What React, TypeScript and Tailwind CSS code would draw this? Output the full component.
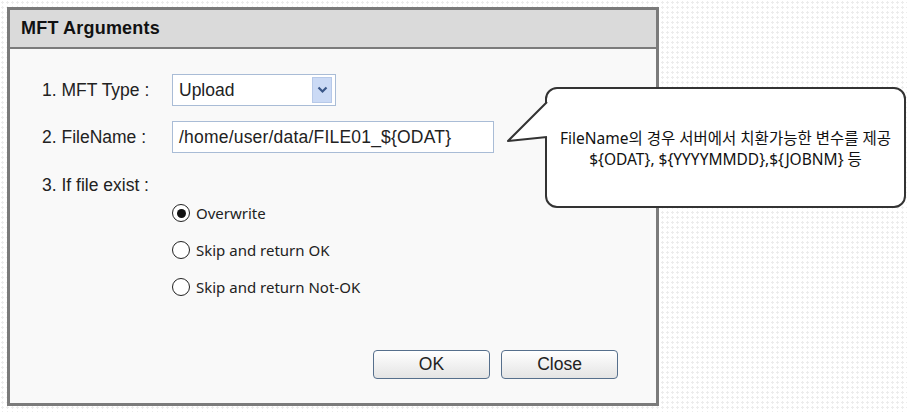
import { useState } from "react";

const options = [
  { id: "overwrite", label: "Overwrite" },
  { id: "skip-ok", label: "Skip and return OK" },
  { id: "skip-nok", label: "Skip and return Not-OK" },
];

function Radio({ checked }: { checked: boolean }) {
  return (
    <span className="w-[18px] h-[18px] rounded-full border-[1.5px] border-[#222] bg-white flex items-center justify-center shrink-0">
      {checked && <span className="w-[9px] h-[9px] rounded-full bg-[#111]" />}
    </span>
  );
}

export default function App() {
  const [choice, setChoice] = useState("overwrite");

  return (
    <div className="relative w-[907px] h-[412px] overflow-hidden bg-white bg-[radial-gradient(circle,#ececec_1px,transparent_1.2px)] bg-size-[5px_5px] font-['Liberation_Sans',Arial,sans-serif] text-[#222]">
      {/* dialog */}
      <div className="ml-[7px] mt-[7px] w-[652px] h-[399px] border-[3px] border-[#7b7b7b] bg-[#f9f9f9] flex flex-col">
        <div className="h-[39px] bg-[#dadada] border-b-2 border-[#7b7b7b] flex items-center pl-[11px] shrink-0">
          <span className="text-[18px] font-bold text-[#111] tracking-[0.2px]">MFT Arguments</span>
        </div>

        <div className="flex-1 flex flex-col pl-[32px] pr-[38px] pt-[25px] pb-[24px] text-[17.5px]">
          <div className="flex items-center h-[32px]">
            <span className="w-[130px]">1. MFT Type :</span>
            <div className="w-[164px] h-[32px] border border-[#a9bcd6] bg-white flex items-center pl-[6px] pr-[3px]">
              <span className="flex-1">Upload</span>
              <span className="w-[20px] h-[26px] bg-[#cbdaf5] border border-[#b7c9e8] flex items-center justify-center">
                <svg width="11" height="8" viewBox="0 0 11 8">
                  <path d="M1.5 1.5 L5.5 5.5 L9.5 1.5" fill="none" stroke="#3a5788" strokeWidth="2.2" />
                </svg>
              </span>
            </div>
          </div>

          <div className="flex items-center h-[32px] mt-[15px]">
            <span className="w-[130px]">2. FileName :</span>
            <div className="w-[322px] h-[32px] border border-[#a9bcd6] bg-white flex items-center pl-[6px] tracking-[0.2px]">
              /home/user/data/FILE01_${"{ODAT}"}
            </div>
          </div>

          <div className="mt-[21px] leading-[22px]">3. If file exist :</div>

          <div className="ml-[130px] mt-[8px] flex flex-col gap-[19px] font-['Comic_Sans_MS','Noto_Sans',sans-serif] text-[15px]">
            {options.map((o) => (
              <label key={o.id} className="flex items-center gap-[6px] h-[18px] cursor-pointer" onClick={() => setChoice(o.id)}>
                <Radio checked={choice === o.id} />
                <span>{o.label}</span>
              </label>
            ))}
          </div>

          <div className="mt-auto flex justify-end gap-[11px]">
            <button className="w-[117px] h-[29px] rounded-[4px] border border-[#566f8c] bg-linear-to-b from-white to-[#e4e4e4] text-[17.5px] text-[#222]">
              OK
            </button>
            <button className="w-[117px] h-[29px] rounded-[4px] border border-[#566f8c] bg-linear-to-b from-white to-[#e4e4e4] text-[17.5px] text-[#222]">
              Close
            </button>
          </div>
        </div>
      </div>

      {/* callout */}
      <div className="absolute left-[545px] top-[87px] w-[361px] h-[121px] rounded-[12px] border-2 border-[#333] bg-white flex flex-col items-center justify-center pt-[3px] text-[15.5px] leading-[21px] text-[#111] font-['Noto_Sans','Noto_Sans_CJK_KR',sans-serif]">
        <p>FileName의 경우 서버에서 치환가능한 변수를 제공</p>
        <p>${"{ODAT}"}, ${"{YYYYMMDD}"},${"{JOBNM}"} 등</p>
      </div>
      <svg className="absolute left-[505px] top-[98px]" width="46" height="48" viewBox="0 0 46 48">
        <polygon points="42,4 3,43 42,39 44,39 44,4" fill="white" />
        <polyline points="42,4 3,43 42,39" fill="none" stroke="#333" strokeWidth="2" strokeLinejoin="round" />
      </svg>
    </div>
  );
}
